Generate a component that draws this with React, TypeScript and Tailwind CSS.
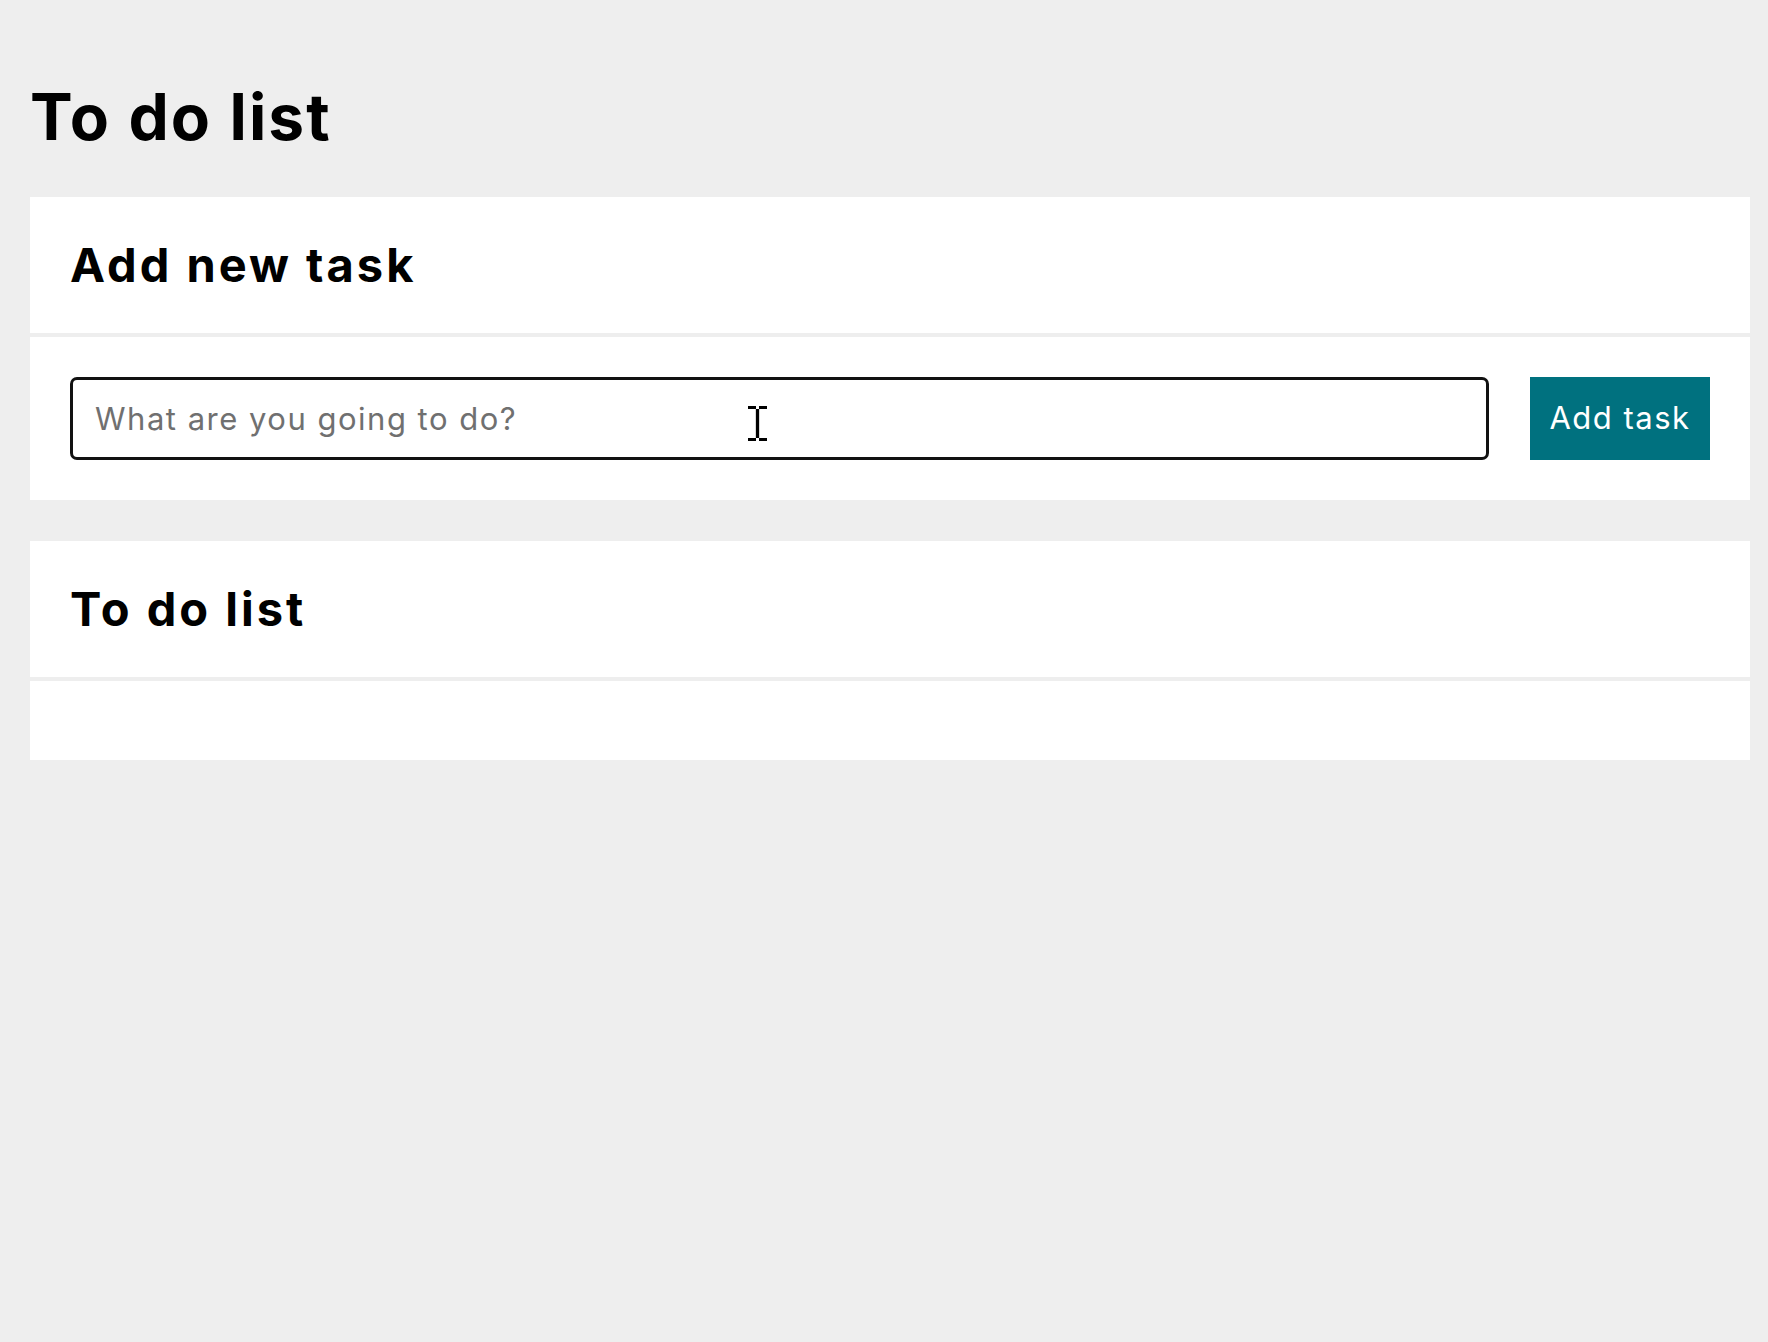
import React from 'react';

const font = { fontFamily: 'Inter, "Noto Sans", sans-serif' };

const Cursor: React.FC = () => (
  <svg className="absolute left-[747px] top-[406px] pointer-events-none" width="21" height="35" viewBox="0 0 21 35">
    <path d="M1 1.5h8M12 1.5h8M1 33.5h8M12 33.5h8" stroke="#000" strokeWidth="3" />
    <path d="M10.5 3v29" stroke="#000" strokeWidth="3.3" />
  </svg>
);

export default function App() {
  const [task, setTask] = React.useState('');
  const [tasks, setTasks] = React.useState<string[]>([]);

  const addTask = (e: React.FormEvent) => {
    e.preventDefault();
    if (task.trim()) {
      setTasks((prev) => [...prev, task.trim()]);
      setTask('');
    }
  };

  return (
    <div className="relative min-h-screen bg-[#eeeeee] pl-[30px] pr-[18px] pt-[74px] text-black" style={font}>
      <h1 className="text-[64px] font-bold leading-[86px] tracking-[2.1px] mb-[37px]">To do list</h1>

      <section className="flex flex-col gap-[4px] mb-[41px]">
        <div className="bg-white h-[136px] flex items-center px-[40px]">
          <h2 className="text-[47px] font-bold tracking-[3px]">Add new task</h2>
        </div>
        <form onSubmit={addTask} className="bg-white flex items-center gap-[41px] px-[40px] py-[40px]">
          <input
            value={task}
            onChange={(e) => setTask(e.target.value)}
            placeholder="What are you going to do?"
            className="flex-1 h-[83px] border-[3px] border-[#111] rounded-[7px] px-[22px] text-[31px] tracking-[1.5px] placeholder:text-[#707070] outline-none"
          />
          <button type="submit" className="h-[83px] w-[180px] bg-[#00717f] text-white text-[31px] tracking-[1.5px]">
            Add task
          </button>
        </form>
      </section>

      <section className="flex flex-col gap-[4px]">
        <div className="bg-white h-[136px] flex items-center px-[40px]">
          <h2 className="text-[47px] font-bold tracking-[3px]">To do list</h2>
        </div>
        <ul className="bg-white min-h-[79px] px-[40px]">
          {tasks.map((t, i) => (
            <li key={i} className="py-4 text-[31px] tracking-[1.5px]">{t}</li>
          ))}
        </ul>
      </section>

      <Cursor />
    </div>
  );
}
